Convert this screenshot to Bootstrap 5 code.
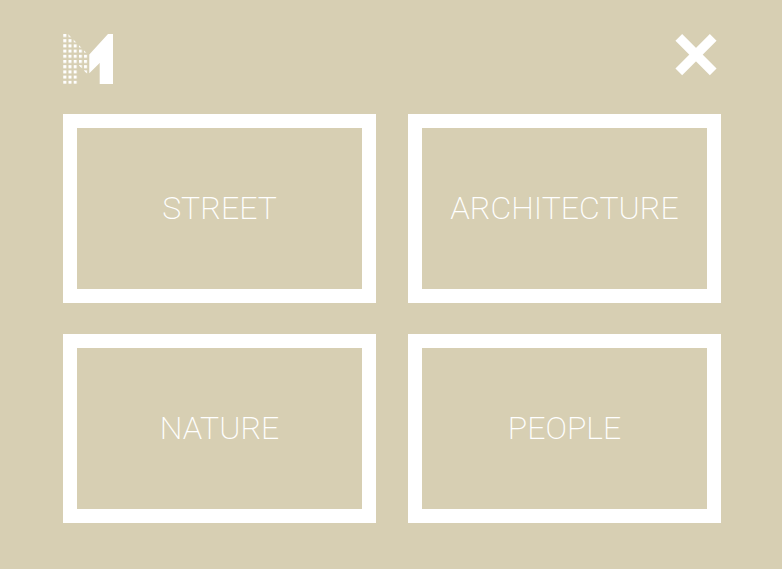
<!DOCTYPE html>
<html lang="en">
<head>
<meta charset="utf-8">
<meta name="viewport" content="width=device-width, initial-scale=1">
<title>Gallery categories</title>
<link href="https://cdn.jsdelivr.net/npm/bootstrap@5.3.0/dist/css/bootstrap.min.css" rel="stylesheet">
<style>
  body { background: #d7cfb3; font-family: Roboto, sans-serif; }
  .gallery-menu { padding: 34px 61px 46px 63px; }
  .menu-head { margin-bottom: 30px; }
  .close-btn { margin-right: 4px; }
  .tiles { --bs-gutter-x: 32px; --bs-gutter-y: 31px; }
  .tile {
    min-height: 189px;
    padding-bottom: 2px;
    border: 14px solid #fff;
    font-size: 32px;
    font-weight: 200;
    line-height: 40px;
  }
</style>
<script src="https://cdn.jsdelivr.net/npm/bootstrap@5.3.0/dist/js/bootstrap.bundle.min.js" defer></script>
</head>
<body>
<div class="gallery-menu">
  <header class="menu-head d-flex justify-content-between align-items-start">
    <a href="#" class="d-block lh-1" aria-label="Home">
      <svg class="d-block" width="50" height="50" viewBox="0 0 50 50" fill="#fff" aria-hidden="true">
        <defs>
          <pattern id="dots" x="0.3" width="5.2" height="5.2" patternUnits="userSpaceOnUse"><rect width="3" height="3"/></pattern>
        </defs>
        <path fill="url(#dots)" d="M0 0H5L24.5 20V40.3L15 30.6V50H0Z"/>
        <path d="M26.3 20.5L45 0H50V50H36.7V29L26.3 39.2Z"/>
      </svg>
    </a>
    <button type="button" class="close-btn btn p-0 border-0 lh-1" aria-label="Close">
      <svg class="d-block" width="42" height="42" viewBox="0 0 42 42" aria-hidden="true">
        <path d="M3.8 3.4L38.2 37.8M38.2 3.4L3.8 37.8" stroke="#fff" stroke-width="9.5"/>
      </svg>
    </button>
  </header>
  <nav class="tiles row row-cols-2" aria-label="Categories">
    <div class="col"><a href="#" class="tile d-flex align-items-center justify-content-center text-white text-decoration-none">STREET</a></div>
    <div class="col"><a href="#" class="tile d-flex align-items-center justify-content-center text-white text-decoration-none">ARCHITECTURE</a></div>
    <div class="col"><a href="#" class="tile d-flex align-items-center justify-content-center text-white text-decoration-none">NATURE</a></div>
    <div class="col"><a href="#" class="tile d-flex align-items-center justify-content-center text-white text-decoration-none">PEOPLE</a></div>
  </nav>
</div>
</body>
</html>
